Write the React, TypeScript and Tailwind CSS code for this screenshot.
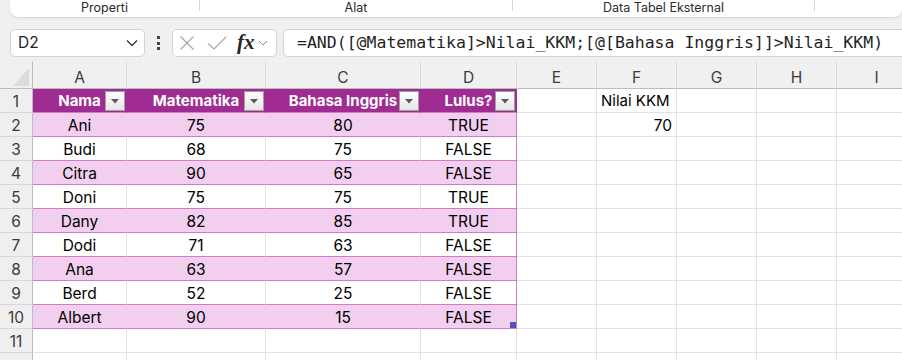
import React from 'react';

const colW = ['w-[94px]', 'w-[139px]', 'w-[155px]', 'w-[96px]', 'w-[80px]', 'w-[80px]', 'w-[80px]', 'w-[80px]', 'w-[80px]'];
const letters = ['A', 'B', 'C', 'D', 'E', 'F', 'G', 'H', 'I'];

const data: [string, string, string, string][] = [
  ['Ani', '75', '80', 'TRUE'],
  ['Budi', '68', '75', 'FALSE'],
  ['Citra', '90', '65', 'FALSE'],
  ['Doni', '75', '75', 'TRUE'],
  ['Dany', '82', '85', 'TRUE'],
  ['Dodi', '71', '63', 'FALSE'],
  ['Ana', '63', '57', 'FALSE'],
  ['Berd', '52', '25', 'FALSE'],
  ['Albert', '90', '15', 'FALSE'],
];

const headers = ['Nama', 'Matematika', 'Bahasa Inggris', 'Lulus?'];

function FilterButton() {
  return (
    <div className="absolute right-[1px] top-[2px] w-[20px] h-[20px] border border-[#a0a0a0] bg-gradient-to-b from-white to-[#e6e6e6] flex items-center justify-center">
      <svg width="8" height="5" viewBox="0 0 8 5">
        <polygon points="0,0 8,0 4,4.5" fill="#5a5a5a" />
      </svg>
    </div>
  );
}

function RowHead({ n }: { n?: number }) {
  return (
    <div className="w-[33px] shrink-0 h-full border-r border-b border-r-[#bdbdbd] border-b-[#d9d9d9] bg-[#efefef] flex items-center justify-center pt-[2px] text-[15.5px] text-[#3b3b3b]">
      {n}
    </div>
  );
}

export default function App() {
  return (
    <div className="w-[902px] h-[360px] overflow-hidden bg-[#f0f0f0] font-['Inter',sans-serif] text-black">
      {/* Ribbon group labels */}
      <div className="ml-[10px] h-[17px] bg-white rounded-b-[8px] shadow-[0_1px_2px_rgba(0,0,0,0.12)] flex text-[12.5px] text-[#2b2b2b] leading-[15px]">
        <div className="w-[189px] shrink-0 flex justify-center">Properti</div>
        <div className="w-px h-[11px] bg-[#d6d6d6] shrink-0" />
        <div className="w-[312px] shrink-0 flex justify-center">Alat</div>
        <div className="w-px h-[11px] bg-[#d6d6d6] shrink-0" />
        <div className="w-[301px] shrink-0 flex justify-center">Data Tabel Eksternal</div>
        <div className="w-px h-[11px] bg-[#d6d6d6] shrink-0" />
      </div>

      {/* Formula bar */}
      <div className="mt-[12px] ml-[10px] h-[28px] flex">
        <div className="w-[135px] shrink-0 h-full bg-white border border-[#d4d4d4] rounded-[5px] flex items-center justify-between pl-[7px] pr-[6px] text-[15.5px] text-[#1f1f1f]">
          <span>D2</span>
          <svg width="12" height="8" viewBox="0 0 12 8">
            <polyline points="1,1.5 6,6.5 11,1.5" fill="none" stroke="#3a3a3a" strokeWidth="1.4" />
          </svg>
        </div>
        <div className="w-[27px] shrink-0 flex flex-col items-center justify-center gap-[2.5px]">
          <div className="w-[3px] h-[3px] bg-[#444]" />
          <div className="w-[3px] h-[3px] bg-[#444]" />
          <div className="w-[3px] h-[3px] bg-[#444]" />
        </div>
        <div className="w-[105px] shrink-0 h-full bg-white border border-[#d4d4d4] rounded-[5px] flex items-center pl-[6px]">
          <svg width="16" height="16" viewBox="0 0 16 16" className="mr-[12px]">
            <path d="M1.5 1.5 L14.5 14.5 M14.5 1.5 L1.5 14.5" stroke="#a6a6a6" strokeWidth="1.2" />
          </svg>
          <svg width="20" height="16" viewBox="0 0 20 16" className="mr-[10px]">
            <polyline points="1,8.5 7,14 19,2" fill="none" stroke="#a6a6a6" strokeWidth="1.2" />
          </svg>
          <span className="font-['Liberation_Serif',serif] italic font-bold text-[21px] leading-none text-[#262626] mr-[3px] mb-[2px]">fx</span>
          <svg width="10" height="6" viewBox="0 0 10 6">
            <polyline points="1,1 5,5 9,1" fill="none" stroke="#8a8a8a" strokeWidth="1" />
          </svg>
        </div>
        <div className="w-[700px] shrink-0 ml-[6px] h-full bg-white border border-[#d4d4d4] rounded-[5px] flex items-center pl-[13px] font-['DejaVu_Sans_Mono',monospace] text-[16.5px] text-[#1f1f1f] whitespace-nowrap">
          =AND([@Matematika]&gt;Nilai_KKM;[@[Bahasa Inggris]]&gt;Nilai_KKM)
        </div>
      </div>

      {/* Grid */}
      <div className="mt-[5px] w-[950px]">
        {/* column headers */}
        <div className="flex h-[27px]">
          <div className="w-[33px] shrink-0 h-full border-r border-b border-[#bdbdbd] flex items-end justify-end pr-[3px] pb-[2px]">
            <svg width="16" height="18" viewBox="0 0 16 18">
              <polygon points="16,0 16,18 0,18" fill="#dcdcdc" />
            </svg>
          </div>
          {letters.map((l, i) => (
            <div key={l} className={`${colW[i]} shrink-0 h-full border-r border-r-[#d9d9d9] border-b border-b-[#bdbdbd] flex items-center justify-center text-[15.5px] text-[#3b3b3b] pt-[5px]`}>
              {l}
            </div>
          ))}
        </div>

        {/* row 1 : table header */}
        <div className="flex h-[24px]">
          <RowHead n={1} />
          {headers.map((h) => (
            <div key={h} className={`${colW[headers.indexOf(h)]} shrink-0 h-full relative bg-[#a02b93] border-b border-b-[#cf7ec6] border-r border-r-[#a02b93] flex items-center justify-center pt-[1px] text-white font-bold text-[15px]`}>
              {h}
              <FilterButton />
            </div>
          ))}
          <div className={`${colW[4]} shrink-0 h-full bg-white border-r border-b border-[#e1e1e1]`} />
          <div className={`${colW[5]} shrink-0 h-full bg-white border-r border-b border-[#e1e1e1] flex items-center pl-[4px] pt-[2px] text-[15px]`}>Nilai KKM</div>
          <div className={`${colW[6]} shrink-0 h-full bg-white border-r border-b border-[#e1e1e1]`} />
          <div className={`${colW[7]} shrink-0 h-full bg-white border-r border-b border-[#e1e1e1]`} />
          <div className={`${colW[8]} shrink-0 h-full bg-white border-r border-b border-[#e1e1e1]`} />
        </div>

        {/* data rows */}
        {data.map((row, r) => {
          const pink = r % 2 === 0;
          return (
            <div key={r} className="flex h-[24px]">
              <RowHead n={r + 2} />
              {row.map((v, i) => (
                <div
                  key={i}
                  className={`${colW[i]} shrink-0 h-full relative border-b border-b-[#cf7ec6] border-r ${i === 3 ? 'border-r-[#cf7ec6]' : pink ? 'border-r-[#f2ceef]' : 'border-r-[#e1e1e1]'} ${pink ? 'bg-[#f2ceef]' : 'bg-white'} flex items-center justify-center pt-[2px] text-[15.5px]`}
                >
                  {v}
                  {r === 8 && i === 3 && <div className="absolute right-0 bottom-0 w-[6px] h-[6px] bg-[#4f55b6]" />}
                </div>
              ))}
              <div className={`${colW[4]} shrink-0 h-full bg-white border-r border-b border-[#e1e1e1]`} />
              <div className={`${colW[5]} shrink-0 h-full bg-white border-r border-b border-[#e1e1e1] flex items-center justify-end pr-[4px] pt-[2px] text-[15.5px]`}>
                {r === 0 ? '70' : ''}
              </div>
              <div className={`${colW[6]} shrink-0 h-full bg-white border-r border-b border-[#e1e1e1]`} />
              <div className={`${colW[7]} shrink-0 h-full bg-white border-r border-b border-[#e1e1e1]`} />
              <div className={`${colW[8]} shrink-0 h-full bg-white border-r border-b border-[#e1e1e1]`} />
            </div>
          );
        })}

        {/* empty rows */}
        {[11, undefined].map((n, k) => (
          <div key={k} className="flex h-[24px]">
            <RowHead n={n} />
            {colW.map((w, i) => (
              <div key={i} className={`${w} shrink-0 h-full bg-white border-r border-b border-[#e1e1e1]`} />
            ))}
          </div>
        ))}
      </div>
    </div>
  );
}
